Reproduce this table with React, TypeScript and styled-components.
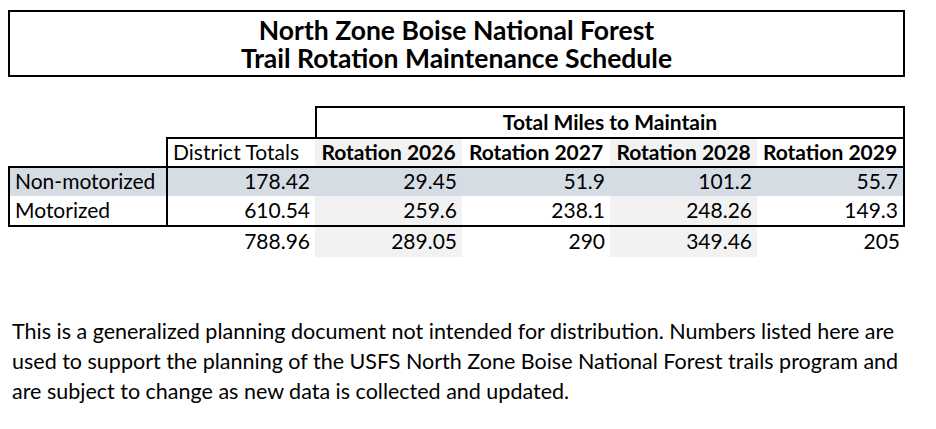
import React from "react"
import styled, { createGlobalStyle } from "styled-components"

const GlobalStyle = createGlobalStyle`
  html, body { margin: 0; padding: 0; background: #fff; }
  body { font-family: Lato, "Open Sans", "Liberation Sans", sans-serif; color: #000; }
`

const BLUE = "#d6dce4"
const GRAY = "#f2f2f2"

const Page = styled.div`
  width: 936px;
  height: 429px;
  padding: 10px 0 0 8px;
  box-sizing: border-box;
`

const TitleBox = styled.div`
  width: 897px;
  height: 67px;
  box-sizing: border-box;
  border: 2px solid #000;
  display: flex;
  flex-direction: column;
  align-items: center;
  justify-content: center;
  font-weight: 700;
  font-size: 26.5px;
  line-height: 28px;
  padding-top: 1px;
`

const Table = styled.div`
  margin-top: 29px;
  display: grid;
  grid-template-columns: 158px 149px 147px 148px 147px 148px;
  grid-template-rows: 31px 29px 30px 31px 30px;
  font-size: 21px;
`

type CellProps = {
  $bold?: boolean
  $align?: "left" | "right" | "center"
  $bg?: string
  $top?: boolean
  $left?: boolean
  $right?: boolean
  $bottom?: boolean
  $span?: number
}

const Cell = styled.div<CellProps>`
  box-sizing: border-box;
  display: flex;
  align-items: center;
  justify-content: ${(p) => (p.$align === "right" ? "flex-end" : p.$align === "center" ? "center" : "flex-start")};
  padding: 0 5px 3px;
  white-space: nowrap;
  font-weight: ${(p) => (p.$bold ? 700 : 400)};
  background: ${(p) => p.$bg || "transparent"};
  border-top: ${(p) => (p.$top ? "2px solid #000" : "none")};
  border-left: ${(p) => (p.$left ? "2px solid #000" : "none")};
  border-right: ${(p) => (p.$right ? "2px solid #000" : "none")};
  border-bottom: ${(p) => (p.$bottom ? "2px solid #000" : "none")};
  grid-column: ${(p) => (p.$span ? `span ${p.$span}` : "auto")};
`

const Note = styled.p`
  margin: 59px 0 0 4px;
  width: 920px;
  font-size: 21.5px;
  line-height: 30px;
  white-space: nowrap;
`

const rows = [
  { label: "Non-motorized", total: "178.42", values: ["29.45", "51.9", "101.2", "55.7"] },
  { label: "Motorized", total: "610.54", values: ["259.6", "238.1", "248.26", "149.3"] },
]
const years = ["2026", "2027", "2028", "2029"]
const sums = ["289.05", "290", "349.46", "205"]

const shade = (i: number) => (i % 2 === 0 ? GRAY : undefined)

export default function App() {
  return (
    <Page>
      <GlobalStyle />
      <TitleBox>
        <div>North Zone Boise National Forest</div>
        <div>Trail Rotation Maintenance Schedule</div>
      </TitleBox>

      <Table>
        <Cell />
        <Cell />
        <Cell $span={4} $bold $align="center" $top $left $right>
          Total Miles to Maintain
        </Cell>

        <Cell />
        <Cell $top $left>District Totals</Cell>
        {years.map((y, i) => (
          <Cell key={y} $bold $align="center" $top $bg={shade(i)} $right={i === 3}>
            Rotation {y}
          </Cell>
        ))}

        {rows.map((r, ri) => {
          const first = ri === 0
          const last = ri === rows.length - 1
          const rowBg = first ? BLUE : undefined
          return (
            <React.Fragment key={r.label}>
              <Cell $left $top={first} $bottom={last} $bg={rowBg}>{r.label}</Cell>
              <Cell $align="right" $left $top={first} $bottom={last} $bg={rowBg}>{r.total}</Cell>
              {r.values.map((v, i) => (
                <Cell
                  key={i}
                  $align="right"
                  $top={first}
                  $bottom={last}
                  $right={i === 3}
                  $bg={rowBg || shade(i)}
                >
                  {v}
                </Cell>
              ))}
            </React.Fragment>
          )
        })}

        <Cell />
        <Cell $align="right">788.96</Cell>
        {sums.map((s, i) => (
          <Cell key={i} $align="right" $bg={shade(i)}>{s}</Cell>
        ))}
      </Table>

      <Note>
        This is a generalized planning document not intended for distribution. Numbers listed here are
        <br />
        used to support the planning of the USFS North Zone Boise National Forest trails program and
        <br />
        are subject to change as new data is collected and updated.
      </Note>
    </Page>
  )
}
